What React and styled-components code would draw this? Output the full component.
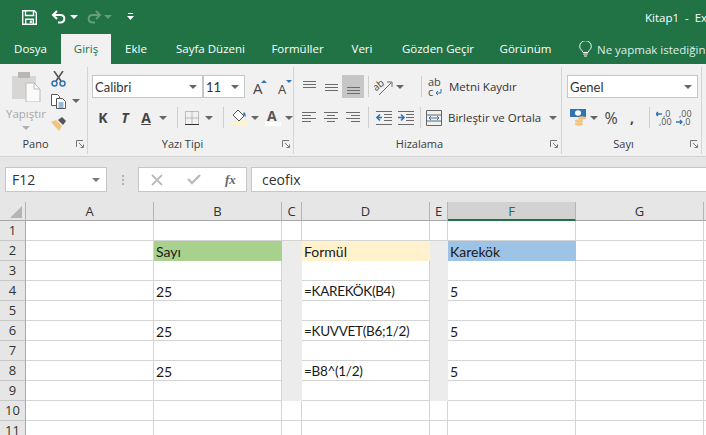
import styled, { createGlobalStyle } from "styled-components";

const GlobalStyle = createGlobalStyle`
  html, body {
    margin: 0;
    background: #e6e6e6;
    overflow: hidden;
  }
  * {
    box-sizing: border-box;
  }
`;

const GREEN = "#217346";
const UI_FONT = `"Open Sans", "Noto Sans", "Liberation Sans", sans-serif`;
const CELL_FONT = `Lato, "Liberation Sans", sans-serif`;

const Page = styled.div`
  width: 706px;
  height: 435px;
  overflow: hidden;
  font-family: ${UI_FONT};
  display: flex;
  flex-direction: column;
`;

/* title bar */
const TitleBar = styled.header`
  height: 34px;
  background: ${GREEN};
  display: flex;
  align-items: center;
  padding-left: 22px;
  color: #fff;
  flex: none;
`;

const QuickBtn = styled.span`
  display: flex;
  align-items: center;
  margin-right: ${(p) => p.$mr || 0}px;
  opacity: ${(p) => (p.$dim ? 0.3 : 1)};
`;

const DocTitle = styled.span`
  margin-left: auto;
  width: 61px;
  font-size: 11.5px;
  white-space: pre;
  overflow: hidden;
`;

/* tabs */
const TabBar = styled.nav`
  height: 30px;
  background: ${GREEN};
  display: flex;
  flex: none;
  overflow: hidden;
`;

const Tab = styled.span`
  width: ${(p) => p.$w}px;
  flex: none;
  text-align: center;
  line-height: 29px;
  font-size: 11.5px;
  white-space: nowrap;
  color: ${(p) => (p.$active ? GREEN : "#fff")};
  background: ${(p) => (p.$active ? "#f1f1f1" : "transparent")};
`;

const Tell = styled.span`
  margin-left: 15px;
  display: flex;
  align-items: center;
  gap: 5px;
  font-size: 11.5px;
  color: #dfeee6;
  white-space: nowrap;
  line-height: 29px;
`;

/* ribbon */
const Ribbon = styled.section`
  height: 93px;
  flex: none;
  background: #f1f1f1;
  border-bottom: 1px solid #d2d2d2;
  display: flex;
`;

const Group = styled.div`
  width: ${(p) => p.$w}px;
  flex: none;
  padding-top: ${(p) => p.$top ?? 11}px;
  display: flex;
  flex-direction: column;
  height: 87px;
  margin-top: 3px;
  border-right: 1px solid #d4d4d4;
  padding-left: ${(p) => p.$left || 0}px;
`;

const GroupBody = styled.div`
  flex: 1;
  display: flex;
  flex-direction: column;
  gap: ${(p) => p.$gap ?? 8}px;
`;

const GroupFooter = styled.div`
  height: 15px;
  margin-bottom: 3px;
  display: flex;
  align-items: center;
  margin-left: ${(p) => -(p.$left || 0)}px;
`;

const GroupLabel = styled.span`
  flex: 1;
  text-align: center;
  font-size: 11px;
  color: #3b3b3b;
`;

const Launcher = styled.svg`
  width: 8px;
  height: 8px;
  margin-right: 3px;
  margin-left: 5px;
`;

const ToolRow = styled.div`
  display: flex;
  align-items: center;
  height: ${(p) => p.$h || 23}px;
`;

const Tool = styled.span`
  width: ${(p) => p.$w}px;
  height: 100%;
  flex: none;
  display: flex;
  align-items: center;
  justify-content: center;
  background: ${(p) => (p.$on ? "#c6c6c6" : "transparent")};
`;

const Letter = styled.span`
  font-size: ${(p) => p.$size || 14}px;
  font-weight: ${(p) => p.$weight || 700};
  font-style: ${(p) => (p.$italic ? "italic" : "normal")};
  color: #444;
  font-family: ${UI_FONT};
  text-decoration: ${(p) => (p.$under ? "underline" : "none")};
`;

const Divider = styled.span`
  width: 1px;
  height: 21px;
  flex: none;
  background: #cfcfcf;
  margin-left: ${(p) => p.$l ?? 4}px;
  margin-right: ${(p) => p.$r ?? 4}px;
`;

const Caret = styled.span`
  width: 0;
  height: 0;
  flex: none;
  border-left: 4px solid transparent;
  border-right: 4px solid transparent;
  border-top: 4px solid ${(p) => p.$color || "#666"};
  margin: 0 ${(p) => p.$m ?? 0}px;
`;

const Select = styled.div`
  width: ${(p) => p.$w}px;
  height: 23px;
  flex: none;
  background: #fff;
  border: 1px solid #c6c6c6;
  display: flex;
  align-items: center;
  justify-content: space-between;
  padding: 0 5px 0 2px;
  font-family: ${CELL_FONT};
  font-size: 13px;
  color: #333;
`;

const TextTool = styled.span`
  font-size: 11.5px;
  color: #333;
  white-space: nowrap;
  margin-left: 4px;
  width: ${(p) => p.$w}px;
`;

/* clipboard */
const PasteLayout = styled.div`
  display: flex;
`;

const PasteBtn = styled.div`
  width: 50px;
  padding-left: 2px;
  margin-top: -2px;
  display: flex;
  flex-direction: column;
  align-items: center;
  color: #a8a8a8;
  font-size: 11.5px;
  line-height: 14px;
  gap: 5px;
`;

const SmallTools = styled.div`
  display: flex;
  flex-direction: column;
  margin-top: -6px;
  gap: 1.5px;
`;

const SmallTool = styled.div`
  height: 21px;
  display: flex;
  align-items: center;
  gap: 6px;
  padding-left: 1px;
`;

/* formula bar */
const FormulaBar = styled.div`
  height: 45px;
  flex: none;
  background: #e6e6e6;
  padding: 10px 0 10px 5px;
  display: flex;
  align-items: stretch;
`;

const NameBox = styled.div`
  width: 102px;
  background: #fff;
  border: 1px solid #c6c6c6;
  display: flex;
  align-items: center;
  justify-content: space-between;
  padding: 0 6px;
  font-size: 14px;
  color: #333;
`;

const Grip = styled.span`
  width: 31px;
  flex: none;
  display: flex;
  flex-direction: column;
  align-items: center;
  justify-content: center;
  gap: 2px;
  & > i {
    width: 2px;
    height: 2px;
    background: #b4b4b4;
  }
`;

const FnButtons = styled.div`
  width: 109px;
  flex: none;
  background: #fff;
  border: 1px solid #c6c6c6;
  display: flex;
  align-items: center;
  padding-left: 12px;
  gap: 24px;
`;

const FxLabel = styled.span`
  font-family: "Liberation Serif", serif;
  font-style: italic;
  font-weight: 700;
  font-size: 13px;
  color: #666;
`;

const FormulaInput = styled.div`
  flex: 1;
  margin-left: 4px;
  background: #fff;
  border: 1px solid #c6c6c6;
  border-right: 0;
  padding-left: 10px;
  font-size: 14px;
  line-height: 23px;
  color: #333;
`;

/* sheet */
const Sheet = styled.div`
  flex: 1;
  display: grid;
  grid-template-columns: 26px 128px 128px 20px 128px 18px 128px 128px 30px;
  grid-template-rows: 19px repeat(11, 20px);
  background: #fff;
  overflow: hidden;
`;

const Corner = styled.div`
  background: #e6e6e6;
  border-right: 1px solid #b4b4b4;
  border-bottom: 1px solid #a6a6a6;
  display: flex;
  align-items: flex-end;
  justify-content: flex-end;
  padding: 0 3px 2px 0;
`;

const ColHead = styled.div`
  background: ${(p) => (p.$on ? "#d2d2d2" : "#e6e6e6")};
  color: ${(p) => (p.$on ? GREEN : "#333")};
  border-right: 1px solid #b4b4b4;
  border-bottom: ${(p) => (p.$on ? `2px solid ${GREEN}` : "1px solid #a6a6a6")};
  text-align: center;
  font-size: 13px;
  line-height: 19px;
`;

const RowHead = styled.div`
  background: #e6e6e6;
  color: #333;
  border-right: 1px solid #a6a6a6;
  border-bottom: 1px solid #c8c8c8;
  text-align: center;
  font-size: 13px;
  line-height: 19px;
`;

const Cell = styled.div`
  background: ${(p) => p.$fill || "#fff"};
  border-right: ${(p) => (p.$fill ? "none" : "1px solid #d4d4d4")};
  border-bottom: ${(p) => (p.$fill ? "none" : "1px solid #d4d4d4")};
  font-family: ${CELL_FONT};
  font-size: ${(p) => (p.$formula ? 13.5 : 14)}px;
  letter-spacing: ${(p) => (p.$formula ? "-0.3px" : "0")};
  line-height: 21px;
  color: #1a1a1a;
  padding-left: 2px;
  white-space: nowrap;
  overflow: hidden;
`;

/* drawings */
const SaveIcon = () => (
  <svg width="15" height="15" viewBox="0 0 15 15" fill="none" stroke="#fff" strokeWidth="1.4">
    <path d="M.7.7h11.6l2 2v11.6H.7z" />
    <path d="M3.5 1v4.5h8V1" />
    <path d="M3.7 14V9.300h7.600V14" />
    <path d="M8.800 10.500v2.500" strokeWidth="2" />
  </svg>
);

const UndoIcon = () => (
  <svg width="16" height="14" viewBox="0 0 16 14" fill="none" stroke="#fff" strokeWidth="2">
    <path d="M6 1 2 5l4 4" />
    <path d="M2.500 5h7c5 0 5 7 .500 7.500H7" />
  </svg>
);

const RedoIcon = () => (
  <svg width="16" height="14" viewBox="0 0 16 14" fill="none" stroke="#fff" strokeWidth="2">
    <path d="M10 1l4 4-4 4" />
    <path d="M13.500 5h-7c-5 0-5 7-.500 7.500h3" />
  </svg>
);

const CustomizeIcon = () => (
  <svg width="7" height="8" viewBox="0 0 7 8">
    <path d="M1 0h5v1H1zM0 3h7L3.500 7z" fill="#fff" />
  </svg>
);

const BulbIcon = () => (
  <svg width="13" height="16" viewBox="0 0 13 16" fill="none" stroke="#fff" strokeWidth="1">
    <path d="M4 11.500C3.500 9 .7 8.500.7 5.500a5.800 5.800 0 0 1 11.600 0c0 3-2.800 3.500-3.300 6z" />
    <path d="M4.200 13h4.600M5 15h3" />
  </svg>
);

const LauncherIcon = () => (
  <Launcher viewBox="0 0 8 8" fill="none" stroke="#777">
    <path d="M.5 7V.5H7" />
    <path d="M3 3l4 4M7.500 4.500v3h-3" />
  </Launcher>
);

const PasteIcon = () => (
  <svg width="29" height="30" viewBox="0 0 29 30">
    <rect x="0" y="4" width="24" height="23" fill="#d8d6d4" />
    <rect x="6" y="0" width="12" height="6" fill="#b9b7b5" />
    <path d="M14 11h8l6 6v13H14z" fill="#fafafa" stroke="#bdbdbd" />
    <path d="M22 11v6h6" fill="none" stroke="#bdbdbd" />
  </svg>
);

const ScissorsIcon = () => (
  <svg width="15" height="16" viewBox="0 0 15 16" fill="none">
    <path d="M3 0l7 10M12 0 5 10" stroke="#555" strokeWidth="1.600" />
    <circle cx="3.500" cy="12.500" r="2.500" stroke="#2f75b5" strokeWidth="1.500" />
    <circle cx="11.500" cy="12.500" r="2.500" stroke="#2f75b5" strokeWidth="1.500" />
  </svg>
);

const CopyIcon = () => (
  <svg width="15" height="15" viewBox="0 0 15 15" fill="#fff" stroke="#555">
    <path d="M.5.500h6l2 2v9H.5z" />
    <path d="M5.500 4.500h6l3 3v7h-9z" />
    <path d="M7.500 9h5M7.500 11h5M7.500 13h5" stroke="#2f75b5" />
  </svg>
);

const BrushIcon = () => (
  <svg width="16" height="15" viewBox="0 0 16 15">
    <path d="M0 6l5-2 6 6-3 5z" fill="#f2c47f" />
    <path d="M7 4l4-3 4 4-3 4z" fill="#555" />
  </svg>
);

const GrowIcon = ({ up }) => (
  <svg width="15" height="16" viewBox="0 0 15 16">
    <text x="0" y="15" fontFamily="Open Sans" fontSize={up ? 15 : 13} fill="#444">A</text>
    <path d={up ? "M8 4l3-3 3 3z" : "M8 1l3 3 3-3z"} fill="#2f75b5" />
  </svg>
);

const BordersIcon = () => (
  <svg width="14" height="14" viewBox="0 0 14 14" fill="none" stroke="#8a8a8a" strokeDasharray="1 1">
    <path d="M.5.500h13v13H.5zM7 .500v13M.5 7h13" />
    <path d="M0 13.500h14" stroke="#333" strokeDasharray="none" />
  </svg>
);

const FillIcon = () => (
  <svg width="16" height="17" viewBox="0 0 16 17">
    <path d="M7 1l6 6-5 5-6-6z" fill="#fff" stroke="#555" />
    <path d="M13 3c2 2 2 3 1.500 5L12 5z" fill="#2f75b5" />
    <rect y="13" width="16" height="4" fill="#fff2cc" />
  </svg>
);

const FontColorIcon = () => (
  <svg width="16" height="17" viewBox="0 0 16 17">
    <text x="2" y="12" fontFamily="Open Sans" fontWeight="700" fontSize="14" fill="#555">A</text>
    <rect y="13" width="16" height="4" fill="#fff" />
  </svg>
);

const Lines = ({ rows, w = 14 }) => (
  <svg width={w} height="14" viewBox={`0 0 ${w} 14`} stroke="#6b6b6b" fill="none">
    {rows.map(([y, x1, x2]) => (
      <path key={y} d={`M${x1} ${y}.5H${x2}`} />
    ))}
  </svg>
);

const OrientIcon = () => (
  <svg width="20" height="18" viewBox="0 0 20 18" fill="none">
    <text x="0" y="10" fontFamily="Open Sans" fontSize="10" fill="#444" transform="rotate(-40 6 9)">ab</text>
    <path d="M5 17 17 5M13 4h5v5" stroke="#666" />
  </svg>
);

const IndentIcon = ({ flip }) => (
  <svg width="16" height="14" viewBox="0 0 16 14" fill="none">
    <g stroke="#6b6b6b">
      <path d="M0 .5h16M0 13.500h16" />
      <path d="M8 3.500h8M8 6.500h8M8 9.500h8" />
    </g>
    <path d={flip ? "M0 6.500h5M3 3.500l3 3-3 3" : "M6 6.500H1M4 3.500l-3 3 3 3"} stroke="#2f75b5" strokeWidth="1.600" />
  </svg>
);

const WrapIcon = () => (
  <svg width="15" height="20" viewBox="0 0 15 20">
    <text x="0" y="9" fontFamily="Open Sans" fontSize="11" fill="#444">ab</text>
    <text x="0" y="19" fontFamily="Open Sans" fontSize="11" fill="#444">c</text>
    <path d="M13 12v4H8M10 14l-2 2 2 2" fill="none" stroke="#2f75b5" />
  </svg>
);

const MergeIcon = () => (
  <svg width="16" height="16" viewBox="0 0 16 16" fill="none" stroke="#666">
    <path d="M.5.500h15v15H.5zM.5 5h15M.5 11h15" />
    <path d="M3 8h10M5 6l-2 2 2 2M11 6l2 2-2 2" stroke="#2f75b5" />
  </svg>
);

const CurrencyIcon = () => (
  <svg width="17" height="17" viewBox="0 0 17 17">
    <rect width="16" height="8" fill="#2f75b5" />
    <ellipse cx="8" cy="4" rx="3" ry="2.700" fill="#fff" />
    <ellipse cx="12" cy="9" rx="4" ry="1.700" fill="#f2c47f" />
    <ellipse cx="9" cy="12" rx="4" ry="1.700" fill="#f2c47f" />
    <ellipse cx="9" cy="15" rx="4" ry="1.700" fill="#f2c47f" />
  </svg>
);

const DecimalIcon = ({ more }) => (
  <svg width="16" height="16" viewBox="0 0 16 16">
    <text x={more ? 3 : 7} y="7" fontFamily="Open Sans" fontSize="9" fill="#555">{more ? ",00" : ",0"}</text>
    <text x={more ? 7 : 3} y="15" fontFamily="Open Sans" fontSize="9" fill="#555">{more ? ",0" : ",00"}</text>
    <path d={more ? "M0 12h6M4 10l2 2-2 2" : "M6 4H0M2 2 0 4l2 2"} fill="none" stroke="#2f75b5" strokeWidth="1.300" />
  </svg>
);

const CrossIcon = () => (
  <svg width="12" height="12" viewBox="0 0 12 12" stroke="#bcbcbc" strokeWidth="1.800">
    <path d="M1 1l10 10M11 1 1 11" />
  </svg>
);

const CheckIcon = () => (
  <svg width="14" height="11" viewBox="0 0 14 11" fill="none" stroke="#bcbcbc" strokeWidth="2.400">
    <path d="M1 5l4 4 8-8" />
  </svg>
);

const columns = ["A", "B", "C", "D", "E", "F", "G", "H"];

const tabs = [
  { name: "Dosya", w: 61 },
  { name: "Giriş", w: 50, active: true },
  { name: "Ekle", w: 50 },
  { name: "Sayfa Düzeni", w: 99 },
  { name: "Formüller", w: 75 },
  { name: "Veri", w: 54 },
  { name: "Gözden Geçir", w: 98 },
  { name: "Görünüm", w: 77 },
];

const cells = {
  B2: "Sayı",
  D2: "Formül",
  F2: "Karekök",
  B4: "25",
  D4: "=KAREKÖK(B4)",
  F4: "5",
  B6: "25",
  D6: "=KUVVET(B6;1/2)",
  F6: "5",
  B8: "25",
  D8: "=B8^(1/2)",
  F8: "5",
};

const fills = { B2: "#a9d18e", D2: "#fff2cc", F2: "#9dc3e6" };

const rows = Array.from({ length: 11 }, (_, i) => i + 1);

function cellFill(col, row) {
  if ((col === "C" || col === "E") && row >= 2 && row <= 9) return "#ececec";
  return fills[col + row];
}

export default function App() {
  return (
    <Page>
      <GlobalStyle />
      <TitleBar>
        <QuickBtn $mr={14}><SaveIcon /></QuickBtn>
        <QuickBtn $mr={3}><UndoIcon /></QuickBtn>
        <QuickBtn $mr={8}><Caret $color="#fff" /></QuickBtn>
        <QuickBtn $mr={2} $dim><RedoIcon /></QuickBtn>
        <QuickBtn $mr={15} $dim><Caret $color="#fff" /></QuickBtn>
        <QuickBtn><CustomizeIcon /></QuickBtn>
        <DocTitle>Kitap1  -  Excel</DocTitle>
      </TitleBar>

      <TabBar>
        {tabs.map((t) => (
          <Tab key={t.name} $w={t.w} $active={t.active}>{t.name}</Tab>
        ))}
        <Tell><BulbIcon />Ne yapmak istediğinizi</Tell>
      </TabBar>

      <Ribbon>
        <Group $w={88} $top={7}>
          <GroupBody>
            <PasteLayout>
              <PasteBtn>
                <PasteIcon />
                Yapıştır
                <Caret $color="#b0b0b0" />
              </PasteBtn>
              <SmallTools>
                <SmallTool><ScissorsIcon /></SmallTool>
                <SmallTool><CopyIcon /><Caret /></SmallTool>
                <SmallTool><BrushIcon /></SmallTool>
              </SmallTools>
            </PasteLayout>
          </GroupBody>
          <GroupFooter>
            <GroupLabel>Pano</GroupLabel>
            <LauncherIcon />
          </GroupFooter>
        </Group>

        <Group $w={206} $left={4} $top={8}>
          <GroupBody>
            <ToolRow>
              <Select $w={111}>Calibri<Caret /></Select>
              <Select $w={42}>11<Caret /></Select>
              <Tool $w={30}><GrowIcon up /></Tool>
              <Tool $w={20}><GrowIcon /></Tool>
            </ToolRow>
            <ToolRow>
              <Tool $w={22}><Letter>K</Letter></Tool>
              <Tool $w={22}><Letter $italic>T</Letter></Tool>
              <Tool $w={20}><Letter $under>A</Letter></Tool>
              <Caret $m={3} />
              <Divider $l={7} $r={4} />
              <Tool $w={20}><BordersIcon /></Tool>
              <Caret $m={3} />
              <Divider $l={7} $r={5} />
              <Tool $w={20}><FillIcon /></Tool>
              <Caret $m={2} />
              <Tool $w={24}><FontColorIcon /></Tool>
              <Caret />
            </ToolRow>
          </GroupBody>
          <GroupFooter $left={4}>
            <GroupLabel>Yazı Tipi</GroupLabel>
            <LauncherIcon />
          </GroupFooter>
        </Group>

        <Group $w={268} $left={4} $top={8}>
          <GroupBody>
            <ToolRow>
              <Tool $w={22}><Lines rows={[[1, 1, 14], [4, 1, 14], [7, 1, 14]]} /></Tool>
              <Tool $w={22}><Lines rows={[[4, 1, 14], [7, 1, 14], [10, 1, 14]]} /></Tool>
              <Tool $w={22} $on><Lines rows={[[7, 1, 14], [10, 1, 14], [13, 1, 14]]} /></Tool>
              <Divider />
              <Tool $w={22}><OrientIcon /></Tool>
              <Caret $m={0.5} />
              <Divider $l={17} $r={3} />
              <Tool $w={20}><WrapIcon /></Tool>
              <TextTool>Metni Kaydır</TextTool>
            </ToolRow>
            <ToolRow>
              <Tool $w={22}><Lines rows={[[1, 0, 14], [4, 0, 9], [7, 0, 14], [10, 0, 9]]} /></Tool>
              <Tool $w={22}><Lines rows={[[1, 0, 14], [4, 3, 11], [7, 0, 14], [10, 3, 11]]} /></Tool>
              <Tool $w={22}><Lines rows={[[1, 0, 14], [4, 5, 14], [7, 0, 14], [10, 5, 14]]} /></Tool>
              <Divider />
              <Tool $w={22}><IndentIcon /></Tool>
              <Tool $w={22}><IndentIcon flip /></Tool>
              <Divider $l={3} $r={3} />
              <Tool $w={20}><MergeIcon /></Tool>
              <TextTool $w={101}>Birleştir ve Ortala</TextTool>
              <Caret />
            </ToolRow>
          </GroupBody>
          <GroupFooter $left={4}>
            <GroupLabel>Hizalama</GroupLabel>
            <LauncherIcon />
          </GroupFooter>
        </Group>

        <Group $w={140} $left={5} $top={8}>
          <GroupBody>
            <ToolRow>
              <Select $w={131}>Genel<Caret /></Select>
            </ToolRow>
            <ToolRow>
              <Tool $w={22}><CurrencyIcon /></Tool>
              <Caret $m={1} />
              <Tool $w={24}><Letter $size={16} $weight={400}>%</Letter></Tool>
              <Tool $w={18}><Letter>,</Letter></Tool>
              <Divider $l={8} $r={5} />
              <Tool $w={18}><DecimalIcon /></Tool>
              <Tool $w={22}><DecimalIcon more /></Tool>
            </ToolRow>
          </GroupBody>
          <GroupFooter $left={5}>
            <GroupLabel>Sayı</GroupLabel>
            <LauncherIcon />
          </GroupFooter>
        </Group>
      </Ribbon>

      <FormulaBar>
        <NameBox>F12<Caret $color="#777" /></NameBox>
        <Grip><i /><i /><i /></Grip>
        <FnButtons>
          <CrossIcon />
          <CheckIcon />
          <FxLabel>fx</FxLabel>
        </FnButtons>
        <FormulaInput>ceofix</FormulaInput>
      </FormulaBar>

      <Sheet>
        <Corner>
          <svg width="12" height="12" viewBox="0 0 12 12">
            <path d="M12 0v12H0z" fill="#b4b4b4" />
          </svg>
        </Corner>
        {columns.map((c) => (
          <ColHead key={c} $on={c === "F"}>{c}</ColHead>
        ))}
        {rows.map((r) => [
          <RowHead key={`h${r}`}>{r}</RowHead>,
          ...columns.map((c) => {
            const value = cells[c + r];
            return (
              <Cell key={c + r} $fill={cellFill(c, r)} $formula={value?.startsWith("=")}>
                {value}
              </Cell>
            );
          }),
        ])}
      </Sheet>
    </Page>
  );
}
